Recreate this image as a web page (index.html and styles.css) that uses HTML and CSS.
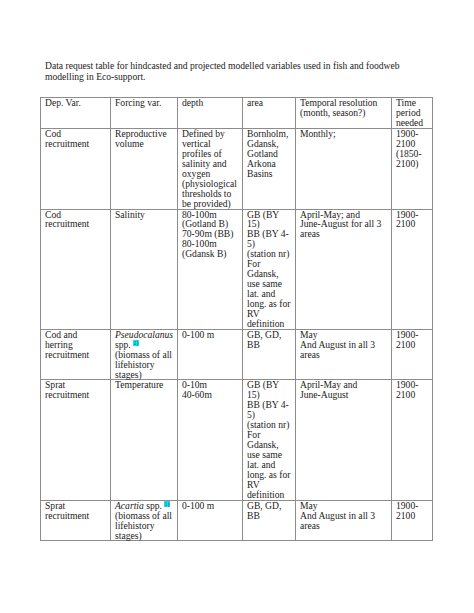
FILE: index.html
```html
<!DOCTYPE html>
<html lang="en">
<head>
<meta charset="utf-8">
<title>Data request table</title>
<link rel="stylesheet" href="styles.css">
</head>
<body>
<div class="page">
  <p class="title">Data request table for hindcasted and projected modelled variables used in fish and foodweb<br>modelling in Eco-support.</p>
  <table class="data">
    <colgroup>
      <col class="c1"><col class="c2"><col class="c3"><col class="c4"><col class="c5"><col class="c6">
    </colgroup>
    <tr>
      <td>Dep. Var.</td>
      <td>Forcing var.</td>
      <td>depth</td>
      <td>area</td>
      <td>Temporal resolution (month, season?)</td>
      <td>Time period needed</td>
    </tr>
    <tr>
      <td>Cod recruitment</td>
      <td>Reproductive volume</td>
      <td>Defined by vertical profiles of salinity and oxygen (physiological thresholds to be provided)</td>
      <td>Bornholm, Gdansk, Gotland Arkona Basins</td>
      <td>Monthly;</td>
      <td>1900-<br>2100 (1850-<br>2100)</td>
    </tr>
    <tr>
      <td>Cod recruitment</td>
      <td>Salinity</td>
      <td>80-100m (Gotland B)<br>70-90m (BB)<br>80-100m (Gdansk B)</td>
      <td>GB (BY 15)<br>BB (BY 4-<br>5)<br>(station nr) For Gdansk, use same lat. and long. as for RV definition</td>
      <td>April-May; and<br>June-August for all 3 areas</td>
      <td>1900-<br>2100</td>
    </tr>
    <tr>
      <td>Cod and herring recruitment</td>
      <td><i>Pseudocalanus</i> spp. <sup class="fn">1)</sup> (biomass of all lifehistory stages)</td>
      <td>0-100 m</td>
      <td>GB, GD, BB</td>
      <td>May<br>And August in all 3 areas</td>
      <td>1900-<br>2100</td>
    </tr>
    <tr>
      <td>Sprat recruitment</td>
      <td>Temperature</td>
      <td>0-10m<br>40-60m</td>
      <td>GB (BY 15)<br>BB (BY 4-<br>5)<br>(station nr) For Gdansk, use same lat. and long. as for RV definition</td>
      <td>April-May and<br>June-August</td>
      <td>1900-<br>2100</td>
    </tr>
    <tr>
      <td>Sprat recruitment</td>
      <td><i>Acartia</i> spp. <sup class="fn">1)</sup><br>(biomass of all lifehistory stages)</td>
      <td>0-100 m</td>
      <td>GB, GD, BB</td>
      <td>May<br>And August in all 3 areas</td>
      <td>1900-<br>2100</td>
    </tr>
  </table>
</div>
</body>
</html>
```
FILE: styles.css
```css
body {
  margin: 0;
  background: #ffffff;
  font-family: "Liberation Serif", "Times New Roman", serif;
  font-size: 9.6px;
  color: #222222;
}

.page {
  padding: 61px 0 0 40px;
}

.title {
  margin: 0 0 0 5px;
  line-height: 10.6px;
}

.data {
  margin-top: 15px;
  border-collapse: collapse;
  table-layout: fixed;
  width: 392px;
}

.c1 { width: 70px; }
.c2 { width: 67px; }
.c3 { width: 65px; }
.c4 { width: 53px; }
.c5 { width: 96px; }
.c6 { width: 41px; }

.data td {
  border: 1px solid #8c8c8c;
  padding: 0 2px 0 4px;
  vertical-align: top;
  line-height: 9.93px;
}

.data td:first-child {
  padding-right: 7px;
}

.fn {
  font-size: 6px;
  line-height: 0;
  vertical-align: 3px;
  background: #19e6ef;
  color: #2a3a6a;
  padding: 0 0.3px;
}
```
